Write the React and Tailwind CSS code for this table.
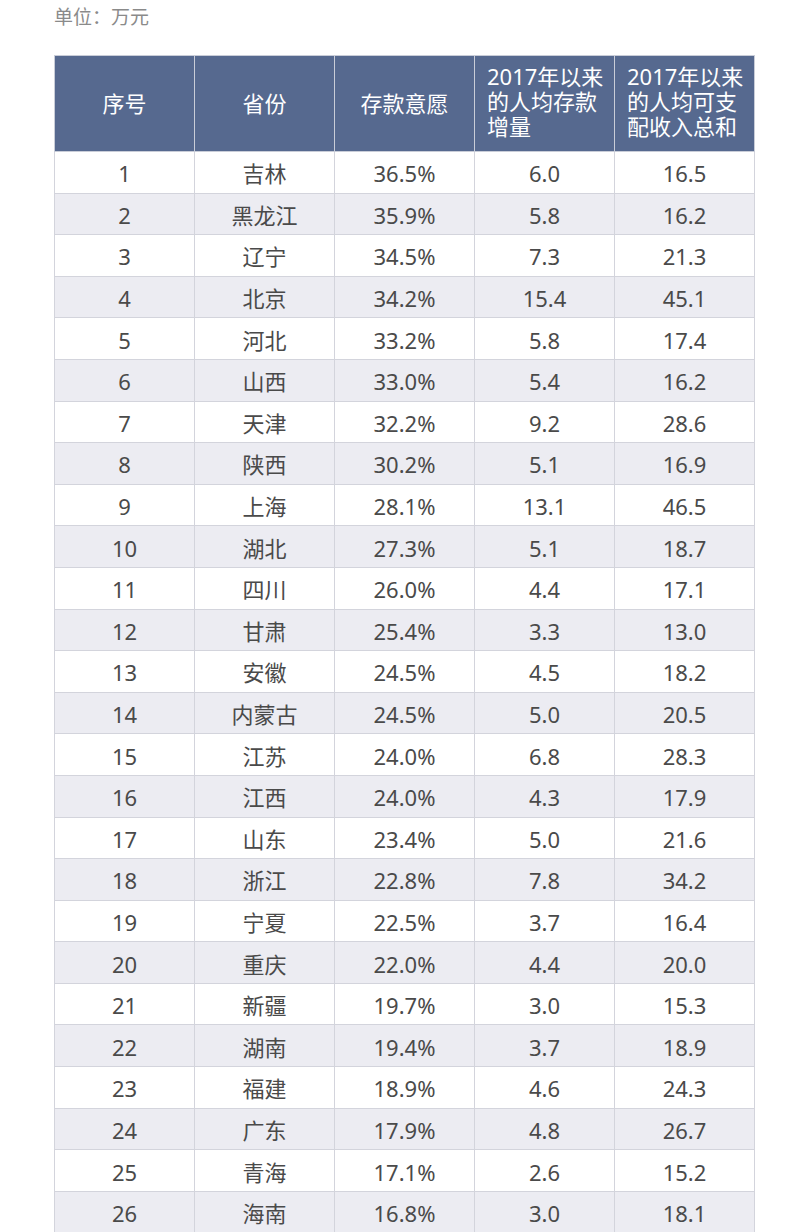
const rows = [
  [1, '吉林', '36.5%', '6.0', '16.5'],
  [2, '黑龙江', '35.9%', '5.8', '16.2'],
  [3, '辽宁', '34.5%', '7.3', '21.3'],
  [4, '北京', '34.2%', '15.4', '45.1'],
  [5, '河北', '33.2%', '5.8', '17.4'],
  [6, '山西', '33.0%', '5.4', '16.2'],
  [7, '天津', '32.2%', '9.2', '28.6'],
  [8, '陕西', '30.2%', '5.1', '16.9'],
  [9, '上海', '28.1%', '13.1', '46.5'],
  [10, '湖北', '27.3%', '5.1', '18.7'],
  [11, '四川', '26.0%', '4.4', '17.1'],
  [12, '甘肃', '25.4%', '3.3', '13.0'],
  [13, '安徽', '24.5%', '4.5', '18.2'],
  [14, '内蒙古', '24.5%', '5.0', '20.5'],
  [15, '江苏', '24.0%', '6.8', '28.3'],
  [16, '江西', '24.0%', '4.3', '17.9'],
  [17, '山东', '23.4%', '5.0', '21.6'],
  [18, '浙江', '22.8%', '7.8', '34.2'],
  [19, '宁夏', '22.5%', '3.7', '16.4'],
  [20, '重庆', '22.0%', '4.4', '20.0'],
  [21, '新疆', '19.7%', '3.0', '15.3'],
  [22, '湖南', '19.4%', '3.7', '18.9'],
  [23, '福建', '18.9%', '4.6', '24.3'],
  [24, '广东', '17.9%', '4.8', '26.7'],
  [25, '青海', '17.1%', '2.6', '15.2'],
  [26, '海南', '16.8%', '3.0', '18.1'],
];

const App = () => {
  return (
    <div
      className="h-[1232px] overflow-hidden bg-white px-[54px] pt-[4px]"
      style={{ fontFamily: '"Noto Sans", "Noto Sans CJK SC", sans-serif' }}
    >
      <div className="h-[51px] text-[19px] leading-[26px] text-[#8a8a8a]">单位：万元</div>
      <table className="w-[701px] table-fixed border-collapse text-[22px]">
        <thead>
          <tr className="h-[96px] bg-[#56698f] text-white">
            <th className="border border-[#c9cdd8] font-normal">序号</th>
            <th className="border border-[#c9cdd8] font-normal">省份</th>
            <th className="border border-[#c9cdd8] font-normal">存款意愿</th>
            <th className="border border-[#c9cdd8] pl-3 pr-0 pb-[4px] text-left align-middle leading-[25px] font-normal whitespace-nowrap">
              <div>2017年以来</div>
              <div>的人均存款</div>
              <div>增量</div>
            </th>
            <th className="border border-[#c9cdd8] pl-3 pr-0 pb-[4px] text-left align-middle leading-[25px] font-normal whitespace-nowrap">
              <div>2017年以来</div>
              <div>的人均可支</div>
              <div>配收入总和</div>
            </th>
          </tr>
        </thead>
        <tbody className="text-[#4a4a4a]">
          {rows.map((r, i) => (
            <tr key={r[0]} className={`h-[41.6px] ${i % 2 === 1 ? 'bg-[#ececf2]' : 'bg-white'}`}>
              {r.map((c, j) => (
                <td key={j} className="border border-[#d3d4dc] p-0 pt-[2px] text-center leading-[24px]">
                  {c}
                </td>
              ))}
            </tr>
          ))}
        </tbody>
      </table>
    </div>
  );
};

export default App;
